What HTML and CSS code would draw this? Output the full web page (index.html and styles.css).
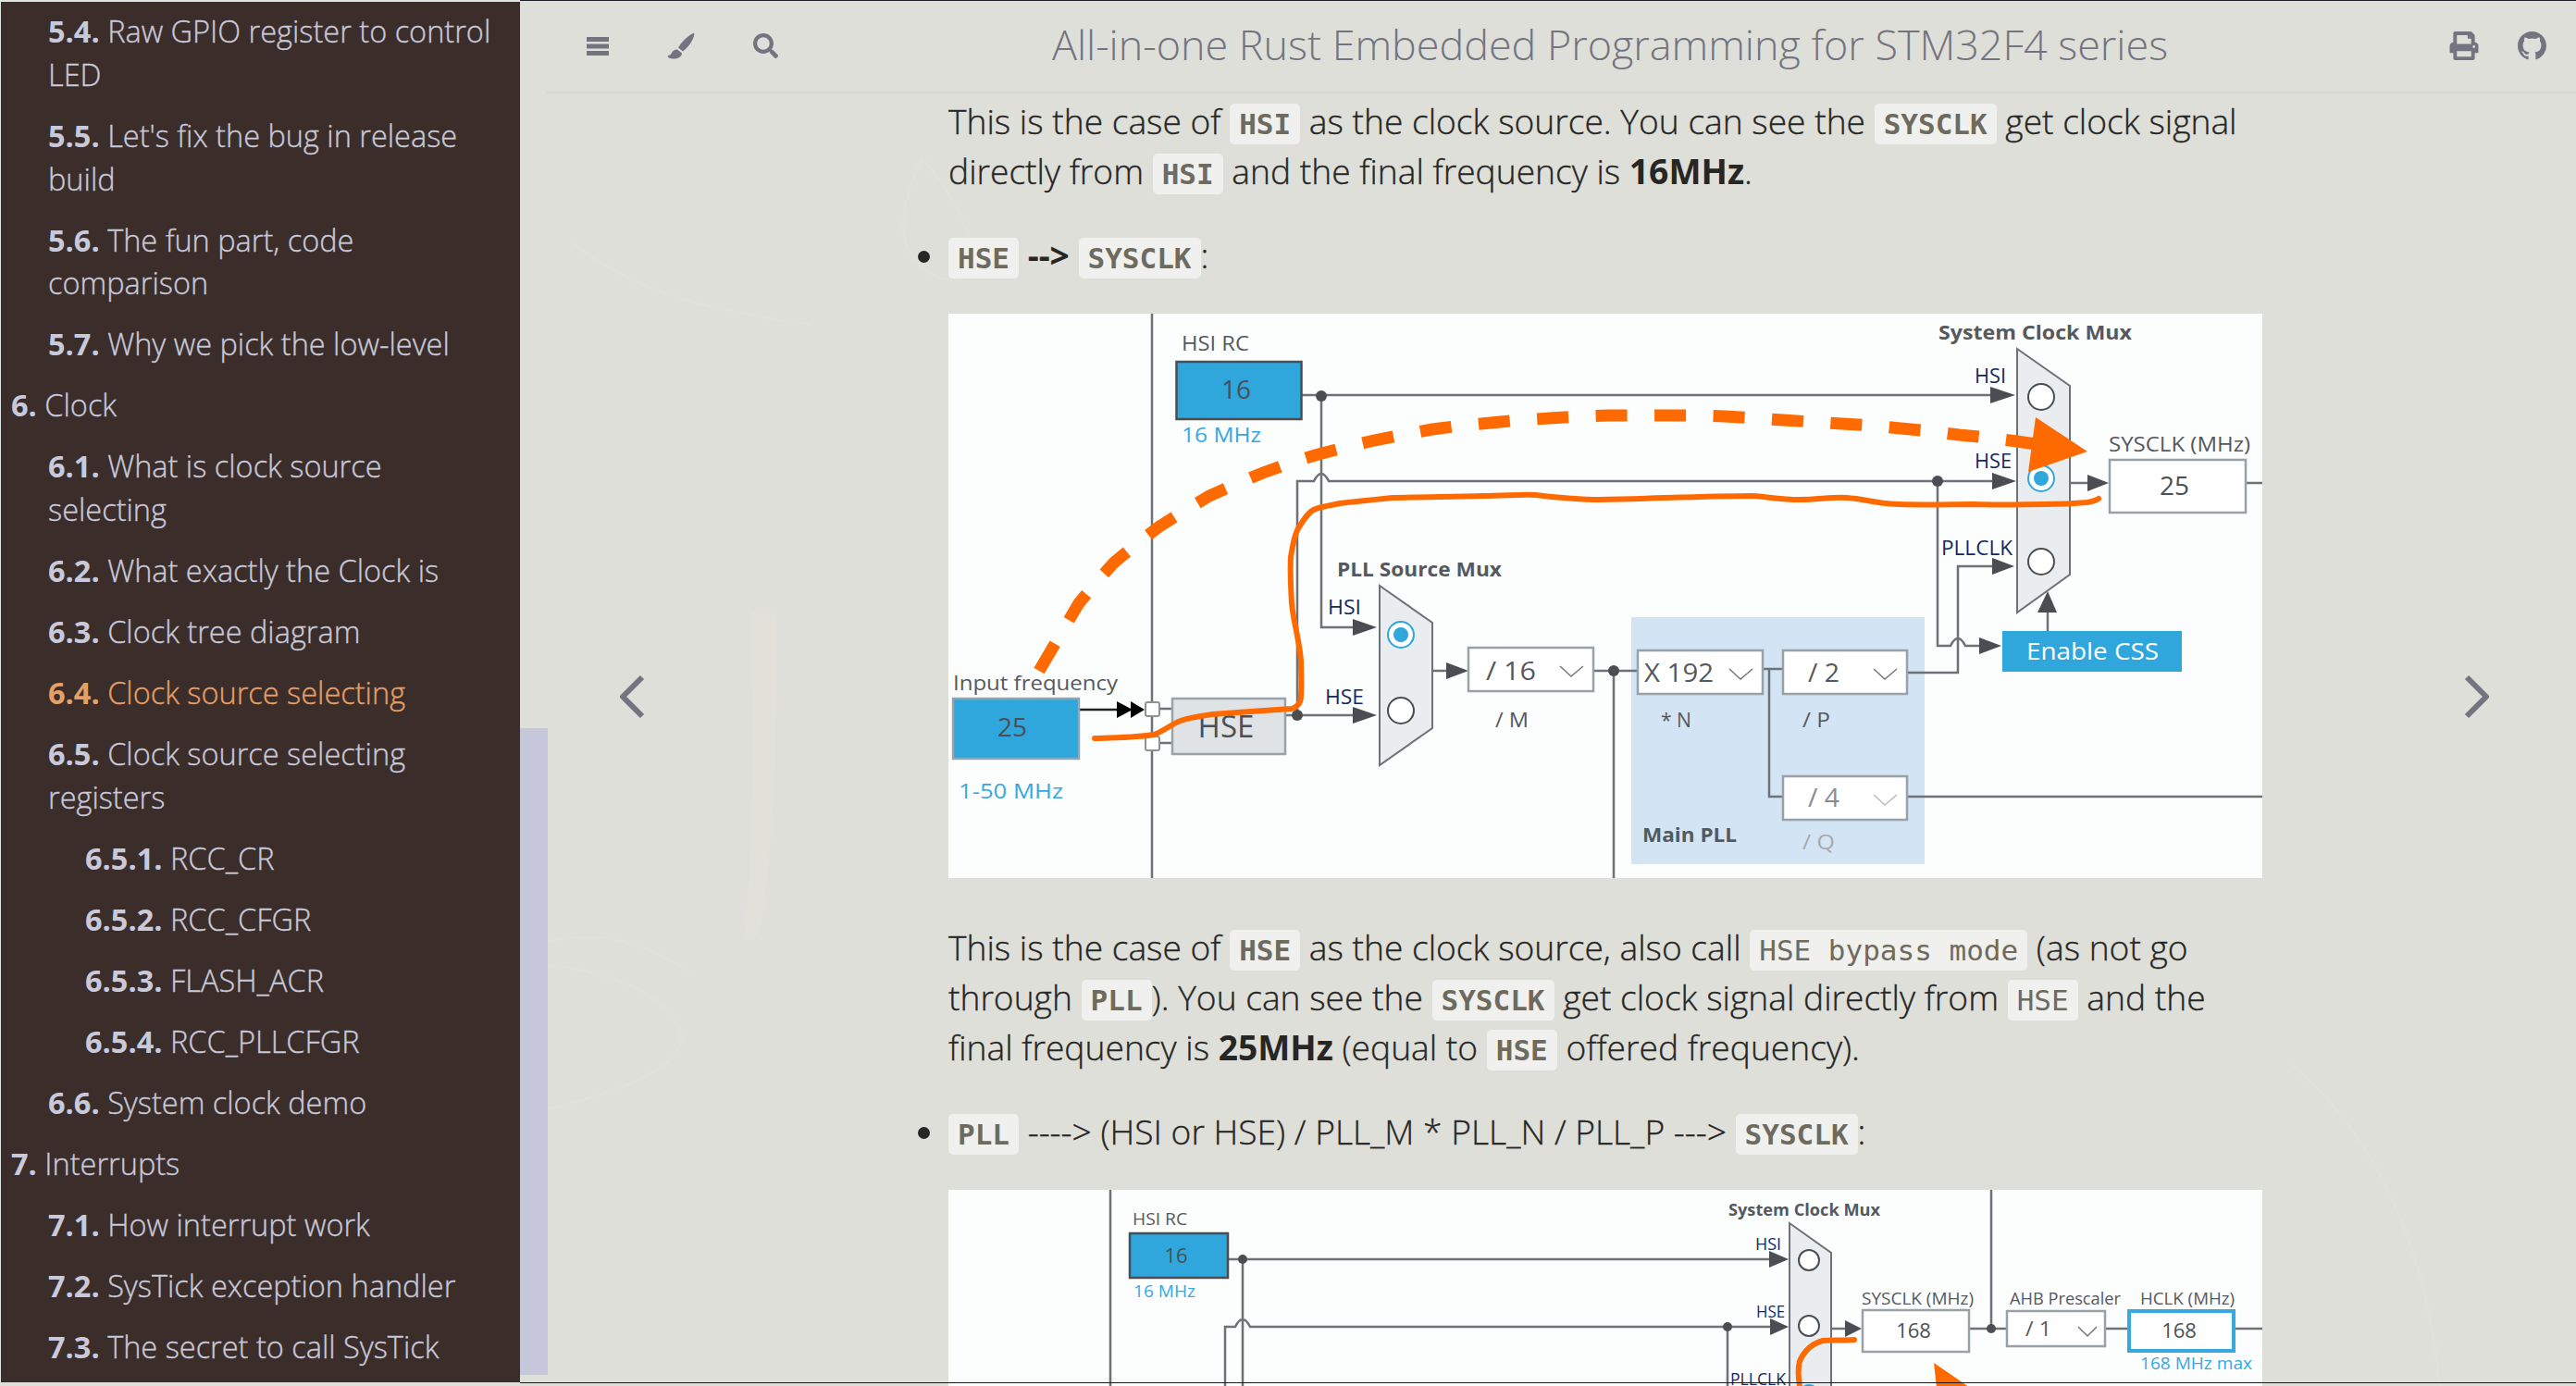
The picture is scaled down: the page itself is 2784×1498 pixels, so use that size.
FILE: index.html
```html
<!DOCTYPE html>
<html lang="en">
<head>
  <meta charset="UTF-8" />
  <title>Clock source selecting - All-in-one Rust Embedded Programming for STM32F4 series</title>
  <link rel="stylesheet" href="styles.css">
</head>
<body>
  <nav class="sidebar">
    <ol class="toc">
      <li class="lvl2"><b>5.4.</b> Raw GPIO register to control LED</li>
      <li class="lvl2"><b>5.5.</b> Let's fix the bug in release build</li>
      <li class="lvl2"><b>5.6.</b> The fun part, code comparison</li>
      <li class="lvl2"><b>5.7.</b> Why we pick the low-level</li>
      <li class="lvl1"><b>6.</b> Clock</li>
      <li class="lvl2"><b>6.1.</b> What is clock source selecting</li>
      <li class="lvl2"><b>6.2.</b> What exactly the Clock is</li>
      <li class="lvl2"><b>6.3.</b> Clock tree diagram</li>
      <li class="lvl2 active"><b>6.4.</b> Clock source selecting</li>
      <li class="lvl2"><b>6.5.</b> Clock source selecting registers</li>
      <li class="lvl3"><b>6.5.1.</b> RCC_CR</li>
      <li class="lvl3"><b>6.5.2.</b> RCC_CFGR</li>
      <li class="lvl3"><b>6.5.3.</b> FLASH_ACR</li>
      <li class="lvl3"><b>6.5.4.</b> RCC_PLLCFGR</li>
      <li class="lvl2"><b>6.6.</b> System clock demo</li>
      <li class="lvl1"><b>7.</b> Interrupts</li>
      <li class="lvl2"><b>7.1.</b> How interrupt work</li>
      <li class="lvl2"><b>7.2.</b> SysTick exception handler</li>
      <li class="lvl2"><b>7.3.</b> The secret to call SysTick</li>
    </ol>
  </nav>
  <div class="scrollbar"><div class="thumb"></div></div>

  <main class="page">
    <svg class="watermark" viewBox="0 0 2192 1498" aria-hidden="true">
      <path d="M262 660 C262 780 262 900 245 1000 C240 1020 225 1020 228 1000 C240 900 235 760 235 660Z" class="wm-fill"/>
      <path d="M0 1040 C100 1050 150 1080 160 1120 C160 1150 100 1180 0 1200" class="wm-line"/>
      <path d="M0 1020 C80 1000 120 1020 170 1050" class="wm-line"/>
      <path d="M40 260 C90 300 150 330 300 350" class="wm-line"/>
      <path d="M1900 1150 C1960 1200 2040 1300 2060 1498" class="wm-line"/>
      <path d="M420 170 C390 230 390 280 440 300 C490 310 480 240 420 170Z" class="wm-line"/>
    </svg>

    <header class="menu-bar">
      <div class="left-buttons">
        <svg class="icon icon-bars" viewBox="0 0 24 20"><path d="M0 0h24v5H0zM0 7.5h24v5H0zM0 15h24v5H0z"/></svg>
        <svg class="icon icon-brush" viewBox="0 0 30 29"><path d="M28 1C29 .5 29.6 1.5 29.2 3 27.5 10 22 17 17 20.500L12 16.500C15 11 22 4 28 1ZM11 18.500L16 22.500C16 26 12 29 6 28.500 2 28 0 27 1 25 3 25 4 24 5 22 6 20 8 18.500 11 18.500Z"/></svg>
        <svg class="icon icon-search" viewBox="0 0 512 512"><path d="M505 442.700L405.300 343c-4.500-4.500-10.600-7-17-7H372c27.600-35.300 44-79.700 44-128C416 93.100 322.900 0 208 0S0 93.100 0 208s93.100 208 208 208c48.300 0 92.700-16.400 128-44v16.300c0 6.400 2.500 12.500 7 17l99.700 99.700c9.400 9.400 24.600 9.400 33.900 0l28.300-28.300c9.400-9.400 9.400-24.600.1-34zM208 336c-70.700 0-128-57.200-128-128 0-70.700 57.200-128 128-128 70.700 0 128 57.200 128 128 0 70.700-57.200 128-128 128z"/></svg>
      </div>
      <h1 class="menu-title">All-in-one Rust Embedded Programming for STM32F4 series</h1>
      <div class="right-buttons">
        <svg class="icon icon-print" viewBox="0 0 512 512"><path d="M448 192V77.250c0-8.490-3.370-16.620-9.370-22.630L393.370 9.370c-6-6-14.140-9.370-22.630-9.370H96C78.330 0 64 14.330 64 32v160c-35.350 0-64 28.650-64 64v112c0 8.840 7.160 16 16 16h48v96c0 17.670 14.330 32 32 32h320c17.670 0 32-14.330 32-32v-96h48c8.840 0 16-7.160 16-16V256c0-35.350-28.650-64-64-64zm-64 256H128v-96h256v96zm0-224H128V64h192v48c0 8.840 7.160 16 16 16h48v96zm48 72c-13.250 0-24-10.750-24-24 0-13.260 10.750-24 24-24s24 10.740 24 24c0 13.250-10.750 24-24 24z"/></svg>
        <svg class="icon icon-github" viewBox="0 0 16 16"><path d="M8 0C3.580 0 0 3.580 0 8c0 3.540 2.290 6.530 5.470 7.590.4.070.55-.17.55-.38 0-.19-.01-.82-.01-1.490-2.010.37-2.530-.49-2.690-.94-.09-.23-.48-.94-.82-1.130-.28-.15-.68-.52-.01-.53.63-.01 1.080.58 1.230.82.72 1.210 1.870.87 2.330.66.07-.52.28-.87.51-1.070-1.780-.2-3.640-.89-3.640-3.950 0-.87.31-1.590.82-2.150-.08-.2-.36-1.020.08-2.120 0 0 .67-.21 2.200.82.64-.18 1.320-.27 2-.27.68 0 1.360.09 2 .27 1.530-1.040 2.200-.82 2.200-.82.44 1.100.16 1.920.08 2.120.51.56.82 1.270.82 2.150 0 3.070-1.870 3.750-3.650 3.950.29.25.54.73.54 1.480 0 1.070-.01 1.930-.01 2.200 0 .21.15.46.55.38A8.013 8.013 0 0016 8c0-4.420-3.580-8-8-8z"/></svg>
      </div>
    </header>

    <svg class="nav-arrow nav-prev" viewBox="0 0 30 50"><path d="M26 4L5 25l21 21"/></svg>
    <svg class="nav-arrow nav-next" viewBox="0 0 30 50"><path d="M4 4l21 21L4 46"/></svg>

    <article class="content">
      <p class="first">This is the case of <code class="b">HSI</code> as the clock source. You can see the <code class="b">SYSCLK</code> get clock signal directly from <code class="b">HSI</code> and the final frequency is <strong>16MHz</strong>.</p>
      <ul>
        <li><code class="b">HSE</code> <strong>--&gt;</strong> <code class="b">SYSCLK</code>:</li>
      </ul>

      <svg class="diagram" viewBox="0 0 1420 610">
        <rect class="bg" width="1420" height="610"/>
        <rect class="pll-panel" x="738" y="328" width="317" height="267"/>

        <!-- wires -->
        <path class="wire" d="M220 0V610"/>
        <path class="wire" d="M381 88H1130"/>
        <path class="wire" d="M403 88V339H440"/>
        <path class="wire" d="M377 434V181H395Q403 165 411 181H1130"/>
        <path class="wire" d="M364 434H440"/>
        <path class="wire" d="M228 427H242M228 464H242"/>
        <path class="wire" d="M523 386H540M697 386H745M719 386V610"/>
        <path class="wire" d="M880 384H902M887 384V522H902M1036 522H1420"/>
        <path class="wire" d="M1036 388H1091V273H1130"/>
        <path class="wire" d="M1069 181V359H1083Q1091 343 1099 359H1116"/>
        <path class="wire" d="M1188 343V320M1212 183H1235M1402 183H1420"/>
        <path class="wire-black" d="M141 428H190"/>
        <polygon class="black" points="182,419 199,428 182,437"/>
        <polygon class="black" points="197,419 212,428 197,437"/>

        <!-- arrow heads and dots -->
        <g class="head">
          <polygon points="1126,79 1153,88 1126,97"/>
          <polygon points="1128,172 1154,181 1128,190"/>
          <polygon points="1128,264 1152,273 1128,282"/>
          <polygon points="437,330 463,339 437,348"/>
          <polygon points="437,425 463,434 437,443"/>
          <polygon points="538,377 562,386 538,395"/>
          <polygon points="1114,350 1138,359 1114,368"/>
          <polygon points="1231,174 1254,183 1231,192"/>
          <polygon points="1188,300 1198,323 1177,323"/>
          <circle cx="403" cy="89" r="6"/>
          <circle cx="1069" cy="181" r="6"/>
          <circle cx="377" cy="434" r="6"/>
          <circle cx="719" cy="386" r="6"/>
        </g>

        <!-- boxes -->
        <rect class="blue-box" x="246.500" y="52" width="135" height="62"/>
        <rect class="blue-box soft" x="5" y="416" width="136" height="65"/>
        <rect class="hse-box" x="242" y="416" width="122" height="60"/>
        <rect class="pin" x="213" y="420" width="15" height="15" rx="2"/>
        <rect class="pin" x="213" y="457" width="15" height="15" rx="2"/>
        <rect class="sel-box" x="562" y="361" width="135" height="47"/>
        <rect class="sel-box" x="745" y="364" width="135" height="47"/>
        <rect class="sel-box" x="902" y="364" width="134" height="47"/>
        <rect class="sel-box" x="902" y="500" width="134" height="47"/>
        <rect class="sel-box" x="1255" y="158" width="147" height="57"/>
        <rect class="css-box" x="1139" y="343" width="194" height="44"/>
        <polygon class="mux" points="466,294 523,334 523,448 466,488"/>
        <polygon class="mux" points="1155,38 1212,78 1212,282 1155,323"/>
        <circle class="radio" cx="1181" cy="90" r="14"/>
        <circle class="radio on" cx="1181" cy="178" r="14"/>
        <circle class="dot-on" cx="1181" cy="178" r="8"/>
        <circle class="radio" cx="1181" cy="268" r="14"/>
        <circle class="radio on" cx="489" cy="347" r="14"/>
        <circle class="dot-on" cx="489" cy="347" r="8"/>
        <circle class="radio" cx="489" cy="429" r="14"/>
        <path class="chev" d="M661 381L673 392 686 381M844 384L856 395 869 384M1000 384L1012 395 1025 384"/>
        <path class="chev light" d="M1000 520L1012 531 1025 520"/>

        <!-- labels -->
        <text class="t" x="252" y="40" font-size="22" textLength="73" lengthAdjust="spacingAndGlyphs">HSI RC</text>
        <text class="t val" x="311" y="92" font-size="28">16</text>
        <text class="t blue" x="252" y="139" font-size="22" textLength="86" lengthAdjust="spacingAndGlyphs">16 MHz</text>
        <text class="t" x="5" y="407" font-size="22" textLength="178" lengthAdjust="spacingAndGlyphs">Input frequency</text>
        <text class="t val" x="69" y="457" font-size="28">25</text>
        <text class="t blue" x="11" y="524" font-size="22" textLength="113" lengthAdjust="spacingAndGlyphs">1-50 MHz</text>
        <text class="t val" x="300" y="458" font-size="33">HSE</text>
        <text class="t bold" x="420" y="284" font-size="22" textLength="178" lengthAdjust="spacingAndGlyphs">PLL Source Mux</text>
        <text class="t navy" x="410" y="325" font-size="22" textLength="36" lengthAdjust="spacingAndGlyphs">HSI</text>
        <text class="t navy" x="407" y="422" font-size="22" textLength="42" lengthAdjust="spacingAndGlyphs">HSE</text>
        <text class="t" x="581" y="396" font-size="28" textLength="54" lengthAdjust="spacingAndGlyphs">/ 16</text>
        <text class="t" x="591" y="447" font-size="22" textLength="36" lengthAdjust="spacingAndGlyphs">/ M</text>
        <text class="t" x="752" y="398" font-size="28" textLength="75" lengthAdjust="spacingAndGlyphs">X 192</text>
        <text class="t" x="770" y="447" font-size="22" textLength="33" lengthAdjust="spacingAndGlyphs">* N</text>
        <text class="t" x="929" y="398" font-size="28" textLength="34" lengthAdjust="spacingAndGlyphs">/ 2</text>
        <text class="t" x="923" y="447" font-size="22" textLength="30" lengthAdjust="spacingAndGlyphs">/ P</text>
        <text class="t faded" x="929" y="533" font-size="28" textLength="34" lengthAdjust="spacingAndGlyphs">/ 4</text>
        <text class="t fainter" x="923" y="579" font-size="22" textLength="35" lengthAdjust="spacingAndGlyphs">/ Q</text>
        <text class="t bold" x="750" y="571" font-size="22" textLength="102" lengthAdjust="spacingAndGlyphs">Main PLL</text>
        <text class="t bold" x="1070" y="28" font-size="22" textLength="209" lengthAdjust="spacingAndGlyphs">System Clock Mux</text>
        <text class="t navy" x="1109" y="75" font-size="22" textLength="34" lengthAdjust="spacingAndGlyphs">HSI</text>
        <text class="t navy" x="1109" y="167" font-size="22" textLength="40" lengthAdjust="spacingAndGlyphs">HSE</text>
        <text class="t navy" x="1073" y="261" font-size="22" textLength="77" lengthAdjust="spacingAndGlyphs">PLLCLK</text>
        <text class="t" x="1254" y="149" font-size="22" textLength="153" lengthAdjust="spacingAndGlyphs">SYSCLK (MHz)</text>
        <text class="t val" x="1325" y="196" font-size="28">25</text>
        <text class="t white" x="1165" y="374" font-size="26" textLength="143" lengthAdjust="spacingAndGlyphs">Enable CSS</text>

        <!-- hand drawn marks -->
        <path class="mark-dash" d="M98 386L118 352 141 313 160 290 179 269 203 249 228 230 255 213 282 197 311 184 340 172 370 161 400 152 430 144 460 137 491 131 523 125 555 121 586 118 618 115 650 113 682 111 713 110 745 110 776 110 808 110 839 111 871 113 902 115 934 117 966 119 998 121 1029 124 1060 127 1092 131 1124 134 1155 138 1175 141"/>
        <polygon class="mark-fill" points="1175,112 1231,149 1167,171"/>
        <path class="mark-line" d="M158 459C185 458 205 458 222 455 235 450 240 444 251 440 262 436 272 435 285 433 310 431 345 429 371 427 380 424 381 418 381 413 382 400 381 390 381 375 379 350 373 335 371 313 370 295 369 280 370 263 372 250 373 243 377 234 384 222 390 213 397 211 405 208 414 207 423 205 440 203 460 201 480 199 510 198 545 198 578 197 600 197 620 195 635 196 660 199 680 201 704 201 760 200 820 197 869 197 885 198 900 201 920 201 940 201 955 198 971 199 990 200 1005 206 1027 206 1060 207 1085 206 1109 206 1140 207 1165 206 1185 206 1205 206 1220 205 1231 204 1236 203 1240 202 1243 200"/>
      </svg>

      <p class="after-pic">This is the case of <code class="b">HSE</code> as the clock source, also call <code>HSE bypass mode</code> (as not go through <code class="b">PLL</code>). You can see the <code class="b">SYSCLK</code> get clock signal directly from <code>HSE</code> and the final frequency is <strong>25MHz</strong> (equal to <code class="b">HSE</code> offered frequency).</p>
      <ul>
        <li><code class="b">PLL</code> ----&gt; (HSI or HSE) / PLL_M * PLL_N / PLL_P ---&gt; <code class="b">SYSCLK</code>:</li>
      </ul>

      <svg class="diagram second" viewBox="0 0 1420 260">
        <rect class="bg" width="1420" height="260"/>
        <path class="wire" d="M175 0V260M299 260V148H310Q318 132 326 148H890M318 75V260M842 148V260"/>
        <path class="wire" d="M302 75H890M1127 0V150M1103 150H1144M1250 150H1275M1390 150H1420M954 150H972"/>
        <g class="head">
          <polygon points="887,66 908,75 887,84"/>
          <polygon points="888,139 908,148 888,157"/>
          <polygon points="969,141 987,150 969,159"/>
          <circle cx="318" cy="75" r="5"/>
          <circle cx="842" cy="148" r="5"/>
          <circle cx="1127" cy="150" r="5"/>
        </g>
        <rect class="blue-box" x="196" y="47" width="106" height="48"/>
        <rect class="sel-box" x="988" y="130" width="115" height="45"/>
        <rect class="sel-box" x="1144" y="131" width="106" height="38"/>
        <rect class="hclk-box" x="1276" y="131" width="113" height="43"/>
        <polygon class="mux" points="909,36 954,68 954,300 909,300"/>
        <circle class="radio" cx="930" cy="76" r="11"/>
        <circle class="radio" cx="930" cy="147" r="11"/>
        <circle class="radio on" cx="930" cy="222" r="11"/>
        <path class="chev" d="M1221 148L1231 158 1241 148"/>

        <text class="t" x="199" y="38" font-size="18" textLength="59" lengthAdjust="spacingAndGlyphs">HSI RC</text>
        <text class="t val" x="246" y="79" font-size="22">16</text>
        <text class="t blue" x="200" y="116" font-size="18" textLength="67" lengthAdjust="spacingAndGlyphs">16 MHz</text>
        <text class="t bold" x="843" y="28" font-size="18" textLength="164" lengthAdjust="spacingAndGlyphs">System Clock Mux</text>
        <text class="t navy" x="872" y="65" font-size="18" textLength="28" lengthAdjust="spacingAndGlyphs">HSI</text>
        <text class="t navy" x="873" y="138" font-size="18" textLength="31" lengthAdjust="spacingAndGlyphs">HSE</text>
        <text class="t navy" x="845" y="211" font-size="18" textLength="60" lengthAdjust="spacingAndGlyphs">PLLCLK</text>
        <text class="t" x="987" y="124" font-size="18" textLength="121" lengthAdjust="spacingAndGlyphs">SYSCLK (MHz)</text>
        <text class="t val" x="1043" y="160" font-size="22">168</text>
        <text class="t" x="1147" y="124" font-size="18" textLength="120" lengthAdjust="spacingAndGlyphs">AHB Prescaler</text>
        <text class="t" x="1164" y="158" font-size="22" textLength="28" lengthAdjust="spacingAndGlyphs">/ 1</text>
        <text class="t" x="1288" y="124" font-size="18" textLength="102" lengthAdjust="spacingAndGlyphs">HCLK (MHz)</text>
        <text class="t val" x="1330" y="160" font-size="22">168</text>
        <text class="t blue" x="1288" y="194" font-size="18" textLength="121" lengthAdjust="spacingAndGlyphs">168 MHz max</text>

        <path class="mark-line" d="M979 162C965 163 955 162 945 163 938 165 932 168 927 174 921 181 919 186 919 191 918 200 919 206 920 212 921 230 922 240 923 260"/>
        <polygon class="mark-fill" points="1065,187 1125,228 1072,250"/>
      </svg>
    </article>

    <div class="edge-line"></div>
  </main>
</body>
</html>
```

FILE: styles.css
```css
* {
  box-sizing: border-box;
}

html, body {
  height: 100%;
  margin: 0;
}

body {
  display: flex;
  overflow: hidden;
  font-family: "Open Sans", sans-serif;
  background: #dedfd9;
}

/* sidebar */
.sidebar {
  flex: 0 0 562px;
  height: 1494px;
  overflow: hidden;
  background: #3b2e2a;
  color: #c8c9db;
  border-top: 2px solid #dfe5e3;
  border-left: 1px solid #dfe5e3;
  font-size: 32.5px;
  font-weight: 300;
  -webkit-text-stroke: .35px currentColor;
  line-height: 46.8px;
}

.toc {
  list-style: none;
  margin: 0;
  padding: 9px 24px 0 0;
}

.toc li {
  margin-bottom: 19.2px;
}

.toc b {
  font-weight: 700;
  -webkit-text-stroke: 0;
}

.lvl1 { padding-left: 11px; }
.lvl2 { padding-left: 51px; }
.lvl3 { padding-left: 91px; }

.toc .active {
  color: #e69f67;
}

.scrollbar {
  flex: 0 0 30px;
  height: 1498px;
  padding-top: 787px;
  margin-right: -30px;
  position: relative;
  z-index: 1;
}

.thumb {
  height: 699px;
  background: #c6c7da;
}

/* main column */
.page {
  flex: 1;
  position: relative;
  height: 1498px;
  overflow: hidden;
  border-top: 1px solid #1d1f2b;
  color: #262625;
}

.watermark {
  position: absolute;
  left: 0;
  top: 0;
  width: 2222px;
  height: 1498px;
}

.wm-fill {
  fill: #e1e0d9;
}

.wm-line {
  fill: none;
  stroke: #e0e1db;
  stroke-width: 3;
}

.menu-bar {
  position: relative;
  display: flex;
  align-items: center;
  height: 100px;
  margin-left: 29px;
  padding-bottom: 1px;
  border-bottom: 2px solid #d6d7d1;
}

.left-buttons {
  display: flex;
  align-items: center;
  flex: 0 0 269px;
  padding-left: 43px;
}

.right-buttons {
  display: flex;
  align-items: center;
  flex: 0 0 164px;
  padding-left: 26px;
}

.icon {
  display: block;
  fill: #737480;
}

.icon-bars { width: 24px; height: 20px; margin-right: 64px; }
.icon-brush { width: 30px; height: 29px; margin: 0 63px 0 -1px; }
.icon-search { width: 27px; height: 27px; }
.icon-print { width: 34px; height: 31px; margin-right: 41px; }
.icon-github { width: 31px; height: 31px; }

.menu-title {
  flex: 1;
  margin: 0 0 3px;
  font-size: 44.900px;
  font-weight: 300;
  line-height: 90px;
  text-align: center;
  color: #737480;
  white-space: nowrap;
}

.nav-arrow {
  position: absolute;
  top: 727px;
  width: 30px;
  height: 50px;
  fill: none;
  stroke: #737480;
  stroke-width: 6;
  stroke-linejoin: round;
}

.nav-prev { left: 106px; }
.nav-next { right: 92px; }

.content {
  position: relative;
  width: 1420px;
  margin-left: 463px;
  padding-top: 3px;
  font-size: 37.2px;
  font-weight: 300;
  -webkit-text-stroke: .35px currentColor;
  line-height: 54px;
}

.content p {
  margin: 0 0 37px;
}

.content ul {
  margin: 0 0 36px;
  padding: 0;
}

.content code {
  font-family: "DejaVu Sans Mono", monospace;
  font-size: 31px;
  line-height: 1;
  -webkit-text-stroke: 0;
  padding: 4px 10px;
  border-radius: 5px;
  background: #f0f0ef;
  color: #6e6b5e;
}

.content code.b {
  font-weight: 700;
}

.content strong {
  font-weight: 700;
  -webkit-text-stroke: 0;
}

.diagram {
  display: block;
  width: 1420px;
  height: 610px;
}

.diagram.second {
  height: 260px;
  margin-top: 36px;
}

.after-pic {
  margin-top: 48px !important;
}

.edge-line {
  position: absolute;
  left: 0;
  right: 0;
  top: 1493px;
  height: 1px;
  background: #1a1a1a;
}

/* diagram parts */
.bg { fill: #fcfdfd; }
.pll-panel { fill: #d3e5f4; }
.wire { fill: none; stroke: #6d7276; stroke-width: 2.500; }
.wire-black { fill: none; stroke: #222; stroke-width: 2.500; }
.black { fill: #000; }
.head { fill: #4a4e52; }
.blue-box { fill: #2fa6dc; stroke: #4a4e52; stroke-width: 2.500; }
.blue-box.soft { stroke: #9aa3a9; }
.hse-box { fill: #dfe3e6; stroke: #9aa3a9; stroke-width: 2.500; }
.pin { fill: #fff; stroke: #8b9298; stroke-width: 2; }
.sel-box { fill: #fff; stroke: #98a1a8; stroke-width: 2.500; }
.hclk-box { fill: #fff; stroke: #36a9e1; stroke-width: 4; }
.css-box { fill: #2fa6dc; }
.mux { fill: #e9edf0; stroke: #6c7278; stroke-width: 2; }
.radio { fill: #fff; stroke: #4a4e52; stroke-width: 2; }
.radio.on { stroke: #2fa6dc; }
.dot-on { fill: #2fa6dc; }
.chev { fill: none; stroke: #777; stroke-width: 1.500; }
.chev.light { stroke: #bbb; }

.t {
  font-family: "Open Sans", sans-serif;
  font-weight: 400;
  -webkit-text-stroke: 0;
  fill: #55595d;
}

.t.val { text-anchor: middle; fill: #4a5055; }
.t.blue { fill: #36a9e1; }
.t.navy { fill: #14295f; }
.t.bold { font-weight: 700; }
.t.white { fill: #fff; }
.t.faded { fill: #888c90; }
.t.fainter { fill: #a6aaae; }

.mark-dash { fill: none; stroke: #ff6a00; stroke-width: 13; stroke-dasharray: 34 29.500; }
.mark-line { fill: none; stroke: #ff6a00; stroke-width: 6; stroke-linecap: round; stroke-linejoin: round; }
.mark-fill { fill: #ff6a00; }
```
